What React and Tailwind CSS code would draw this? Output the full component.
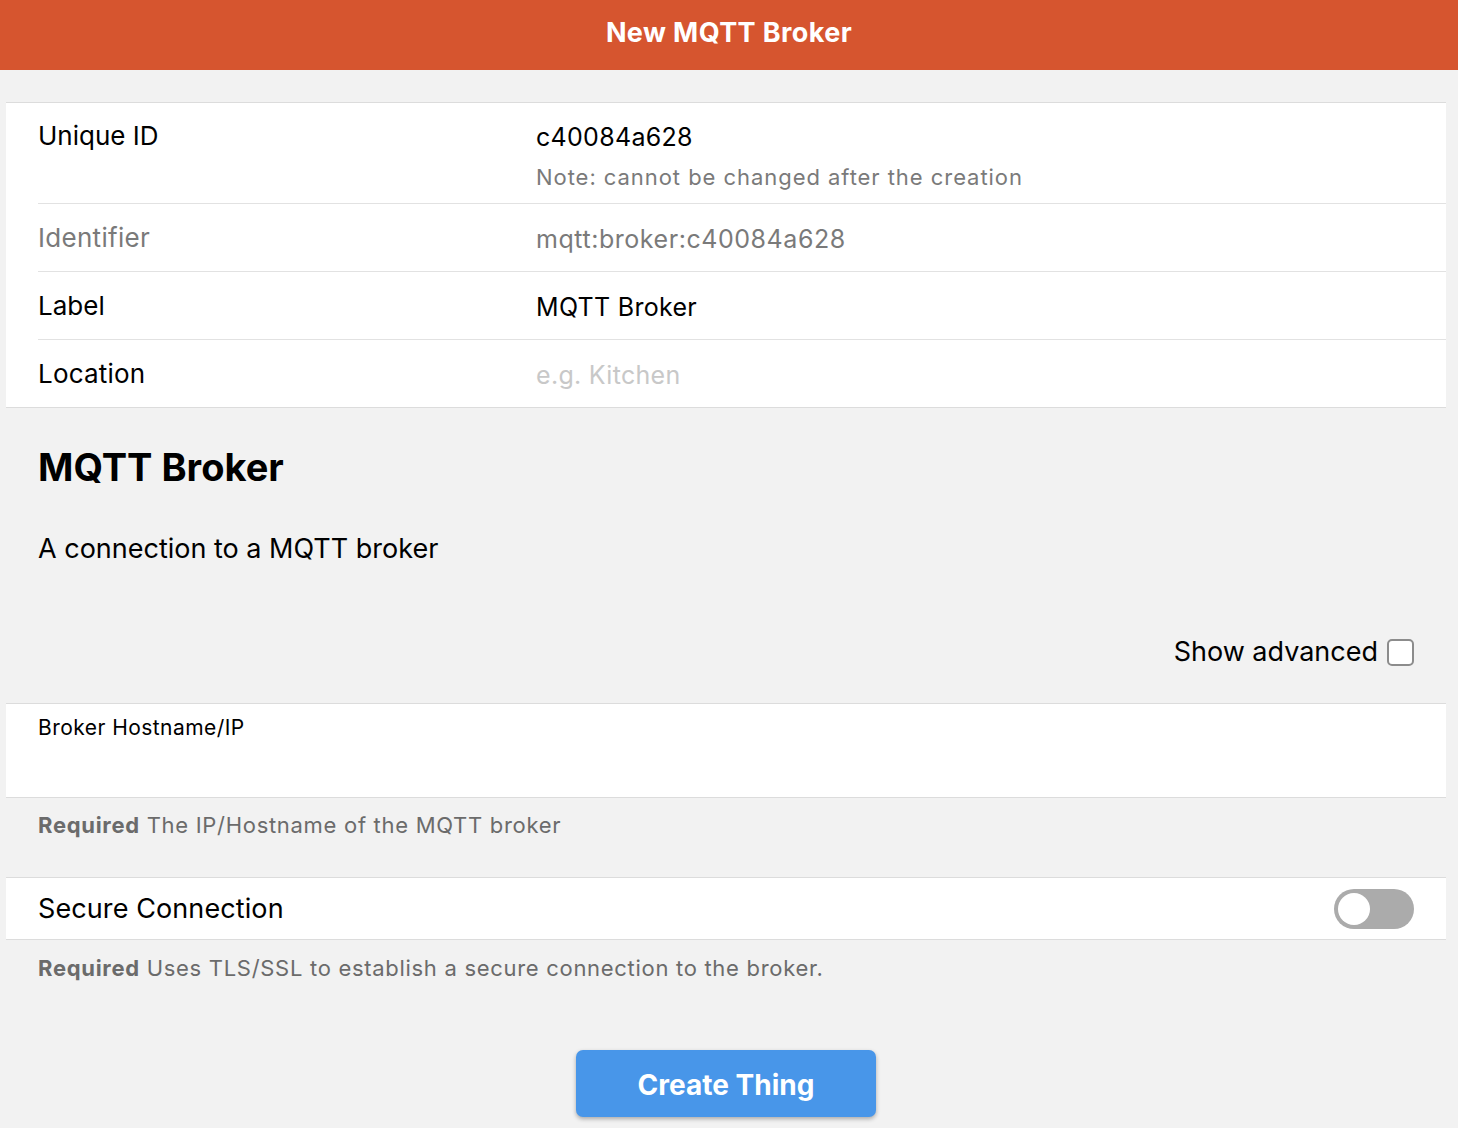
export default function App() {
  const font = { fontFamily: 'Inter, "Noto Sans", "Liberation Sans", sans-serif' };
  return (
    <div className="min-h-[1128px] bg-[#f2f2f2] text-black" style={font}>
      <div className="h-[70px] bg-[#d6552f] flex items-center justify-center pb-[4px]">
        <span className="text-white text-[27px] font-bold tracking-[0.4px]">New MQTT Broker</span>
      </div>

      <div className="pt-[32px] pl-[6px] pr-[12px]">
        <div className="bg-white border-y border-[#dcdcdc]">
          <div className="flex pl-[32px]">
            <div className="w-[498px] pt-[16px] text-[26px] leading-[34px]">Unique ID</div>
            <div className="flex-1 pt-[17px] pb-[11px]">
              <div className="text-[25px] leading-[34px] tracking-[0.3px]">c40084a628</div>
              <div className="text-[22px] leading-[30px] mt-[8px] text-[#7a7a7a] tracking-[0.95px]">Note: cannot be changed after the creation</div>
            </div>
          </div>
          <div className="ml-[32px] border-t border-[#e2e2e2] flex h-[68px] items-center">
            <div className="w-[498px] text-[26px] text-[#7a7a7a] tracking-[0.3px]">Identifier</div>
            <div className="flex-1 text-[25px] text-[#7a7a7a] pt-[5px] tracking-[0.55px]">mqtt:broker:c40084a628</div>
          </div>
          <div className="ml-[32px] border-t border-[#e2e2e2] flex h-[68px] items-center">
            <div className="w-[498px] text-[26px]">Label</div>
            <div className="flex-1 text-[25px] pt-[4px] tracking-[0.3px]">MQTT Broker</div>
          </div>
          <div className="ml-[32px] border-t border-[#e2e2e2] flex h-[68px] items-center">
            <div className="w-[498px] text-[26px] tracking-[0.2px]">Location</div>
            <div className="flex-1 text-[25px] text-[#c8c8c8] pt-[5px] tracking-[0.3px]">e.g. Kitchen</div>
          </div>
        </div>
      </div>

      <div className="pl-[38px] pr-[44px]">
        <h1 className="mt-[34px] text-[38px] leading-[50px] font-bold">MQTT Broker</h1>
        <p className="mt-[39px] text-[27px] leading-[36px]">A connection to a MQTT broker</p>
        <div className="mt-[67px] flex justify-end items-center gap-[9px]">
          <span className="text-[27px] leading-[36px]">Show advanced</span>
          <span className="w-[27px] h-[27px] rounded-[5px] border-2 border-[#8c8c8c] bg-white"></span>
        </div>
      </div>

      <div className="pl-[6px] pr-[12px] mt-[33px]">
        <div className="bg-white border-y border-[#dcdcdc] h-[95px] pl-[32px] pt-[10px]">
          <div className="text-[21px] leading-[28px] tracking-[0.45px]">Broker Hostname/IP</div>
        </div>
      </div>
      <div className="px-[38px] pt-[12px] text-[22px] leading-[30px] text-[#6b6b6b] tracking-[0.7px]">
        <span className="font-bold">Required</span> The IP/Hostname of the MQTT broker
      </div>

      <div className="pl-[6px] pr-[12px] mt-[37px]">
        <div className="bg-white border-y border-[#dcdcdc] h-[63px] pl-[32px] pr-[32px] flex items-center justify-between">
          <span className="text-[27px] leading-[36px] tracking-[0.1px]">Secure Connection</span>
          <span className="w-[80px] h-[40px] rounded-full bg-[#ababab] p-[4px] flex items-center">
            <span className="w-[32px] h-[32px] rounded-full bg-white block"></span>
          </span>
        </div>
      </div>
      <div className="px-[38px] pt-[13px] text-[22px] leading-[30px] text-[#6b6b6b] tracking-[0.7px]">
        <span className="font-bold">Required</span> Uses TLS/SSL to establish a secure connection to the broker.
      </div>

      <div className="flex justify-center mt-[67px] pr-[6px]">
        <button className="w-[300px] h-[67px] rounded-[7px] bg-[#4896e9] text-white text-[28px] font-bold shadow-[0_2px_4px_rgba(0,0,0,0.3)] pt-[2px]">
          Create Thing
        </button>
      </div>
    </div>
  );
}
